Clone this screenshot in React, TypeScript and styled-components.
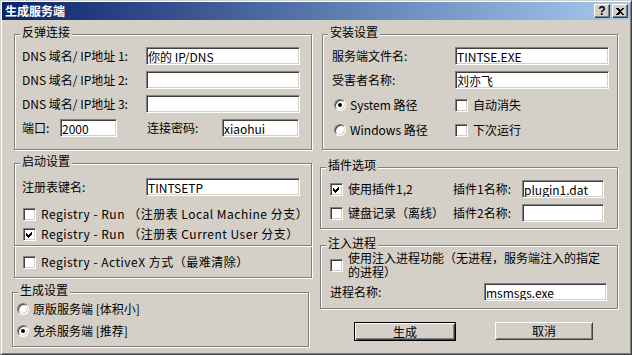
import React from "react";
import styled, { createGlobalStyle } from "styled-components";

const FACE = "#D4D0C8";

const GlobalStyle = createGlobalStyle`
  html, body { margin: 0; padding: 0; background: ${FACE}; }
  body {
    font-family: "Noto Sans CJK SC", "Liberation Sans", sans-serif;
    font-size: 12px;
    color: #000;
  }
  * { box-sizing: border-box; }
`;

const Window = styled.div`
  width: 632px;
  height: 355px;
  background: ${FACE};
  border: 1px solid;
  border-color: ${FACE} #404040 #404040 ${FACE};
  box-shadow: inset 1px 1px 0 #fff, inset -1px -1px 0 #808080;
  padding: 1px;
  display: flex;
  flex-direction: column;
  overflow: hidden;
`;

const TitleBar = styled.div`
  height: 18px;
  flex: none;
  display: flex;
  align-items: center;
  padding: 0 2px 0 3px;
  background: linear-gradient(to right, #0a246a, #a6caf0);
`;

const Title = styled.span`
  flex: 1;
  color: #fff;
  font-weight: bold;
  font-size: 12px;
  line-height: 14px;
`;

const CaptionButtons = styled.div`
  display: flex;
  gap: 2px;
`;

const CaptionButton = styled.div`
  width: 16px;
  height: 14px;
  background: ${FACE};
  display: flex;
  align-items: center;
  justify-content: center;
  border: 1px solid;
  border-color: #fff #404040 #404040 #fff;
  box-shadow: inset -1px -1px 0 #808080;
  font: bold 12px "Liberation Sans", sans-serif;
  line-height: 12px;
`;

const Body = styled.div`
  display: grid;
  grid-template-columns: 300px 298px;
  column-gap: 8px;
  padding-left: 10px;
  align-items: start;
`;

const Column = styled.div`
  display: flex;
  flex-direction: column;
`;

const Group = styled.div<{ $h: number; $mt: number; $ml?: number; $w: number }>`
  position: relative;
  width: ${(p) => p.$w}px;
  height: ${(p) => p.$h}px;
  margin-top: ${(p) => p.$mt}px;
  margin-left: ${(p) => p.$ml ?? 0}px;
  border: 1px solid #808080;
  box-shadow: inset 1px 1px 0 #fff, 1px 1px 0 #fff;
`;

const Legend = styled.span`
  position: absolute;
  top: -10px;
  left: 5px;
  padding: 0 2px;
  background: ${FACE};
  line-height: 14px;
  white-space: nowrap;
`;

const Content = styled.div<{ $pt: number; $pl: number; $gap?: number }>`
  display: flex;
  flex-direction: column;
  gap: ${(p) => p.$gap ?? 0}px;
  padding: ${(p) => p.$pt}px 0 0 ${(p) => p.$pl}px;
`;

const Row = styled.div<{ $h?: number; $mt?: number }>`
  display: flex;
  align-items: center;
  height: ${(p) => p.$h ?? 18}px;
  margin-top: ${(p) => p.$mt ?? 0}px;
`;

const Label = styled.span<{ $w?: number; $ml?: number }>`
  flex: none;
  width: ${(p) => (p.$w ? `${p.$w}px` : "auto")};
  margin-left: ${(p) => p.$ml ?? 0}px;
  white-space: nowrap;
  line-height: 14px;
`;

const TextBox = styled.input<{ $w: number }>`
  flex: none;
  width: ${(p) => p.$w}px;
  height: 18px;
  margin: 0;
  padding: 0 1px;
  border: 1px solid;
  border-color: #808080 #fff #fff #808080;
  box-shadow: inset 1px 1px 0 #404040, inset -1px -1px 0 ${FACE};
  background: #fff;
  font: 12px "Noto Sans CJK SC", "Liberation Sans", sans-serif;
  line-height: 14px;
  color: #000;
  outline: none;
`;

const Separator = styled.div`
  height: 2px;
  margin: 3px -1px 0 -8px;
  border-top: 1px solid #808080;
  border-bottom: 1px solid #fff;
`;

const Option = styled.label<{ $w?: number; $ml?: number; $ls?: number }>`
  flex: none;
  display: flex;
  align-items: center;
  width: ${(p) => (p.$w ? `${p.$w}px` : "auto")};
  margin-left: ${(p) => p.$ml ?? 0}px;
  letter-spacing: ${(p) => p.$ls ?? 0}px;
  white-space: nowrap;
  line-height: 14px;
`;

const Box = styled.span`
  flex: none;
  width: 13px;
  height: 13px;
  margin-right: 5px;
  background: #fff;
  border: 1px solid;
  border-color: #808080 #fff #fff #808080;
  box-shadow: inset 1px 1px 0 #404040, inset -1px -1px 0 ${FACE};
  display: flex;
  align-items: center;
  justify-content: center;
`;

const Round = styled.span<{ $on?: boolean }>`
  position: relative;
  flex: none;
  width: 12px;
  height: 12px;
  margin-right: 4px;
  border-radius: 50%;
  background: #fff;
  border: 1px solid;
  border-color: #808080 #fff #fff #808080;
  box-shadow: inset 1px 1px 0 #404040, inset -1px -1px 0 ${FACE};
  &::after {
    content: "";
    display: ${(p) => (p.$on ? "block" : "none")};
    position: absolute;
    left: 3px;
    top: 3px;
    width: 4px;
    height: 4px;
    border-radius: 50%;
    background: #000;
  }
`;

const WrapText = styled.span`
  display: flex;
  flex-direction: column;
  line-height: 14px;
  white-space: nowrap;
`;

const ButtonRow = styled.div`
  display: flex;
  align-items: flex-start;
  margin-top: 13px;
  padding-left: 34px;
  gap: 39px;
`;

const Button = styled.div<{ $default?: boolean }>`
  display: flex;
  align-items: center;
  justify-content: center;
  width: ${(p) => (p.$default ? 102 : 98)}px;
  height: ${(p) => (p.$default ? 19 : 18)}px;
  background: ${FACE};
  line-height: 14px;
  border: 1px solid;
  border-color: ${(p) => (p.$default ? "#000" : "#fff #404040 #404040 #fff")};
  box-shadow: ${(p) =>
    p.$default
      ? "inset 1px 1px 0 #fff, inset -1px -1px 0 #404040, inset -2px -2px 0 #808080"
      : `inset 1px 1px 0 ${FACE}, inset -1px -1px 0 #808080`};
`;

const Check = ({ on }: { on?: boolean }) => (
  <Box>
    {on && (
      <svg width="9" height="9" viewBox="0 0 9 9" shapeRendering="crispEdges">
        <polygon points="1,3 3,5 7,1 7,4 3,8 1,6" fill="#000" />
      </svg>
    )}
  </Box>
);

const CloseGlyph = () => (
  <svg width="8" height="7" viewBox="0 0 8 7" shapeRendering="crispEdges">
    <path d="M0 0h2l2 2 2-2h2L5 3.5 8 7H6L4 5 2 7H0l3-3.5z" fill="#000" />
  </svg>
);

export default function App() {
  return (
    <>
      <GlobalStyle />
      <Window>
        <TitleBar>
          <Title>生成服务端</Title>
          <CaptionButtons>
            <CaptionButton>?</CaptionButton>
            <CaptionButton>
              <CloseGlyph />
            </CaptionButton>
          </CaptionButtons>
        </TitleBar>
        <Body>
          <Column>
            <Group $w={298} $h={116} $mt={14} $ml={2}>
              <Legend>反弹连接</Legend>
              <Content $pt={12} $pl={7} $gap={6}>
                <Row>
                  <Label $w={124}>DNS 域名/ IP地址 1:</Label>
                  <TextBox $w={154} value="你的 IP/DNS" readOnly />
                </Row>
                <Row>
                  <Label $w={124}>DNS 域名/ IP地址 2:</Label>
                  <TextBox $w={154} value="" readOnly />
                </Row>
                <Row>
                  <Label $w={124}>DNS 域名/ IP地址 3:</Label>
                  <TextBox $w={154} value="" readOnly />
                </Row>
                <Row>
                  <Label $w={38}>端口:</Label>
                  <TextBox $w={57} value="2000" readOnly />
                  <Label $w={75} $ml={30}>
                    连接密码:
                  </Label>
                  <TextBox $w={77} value="xiaohui" readOnly />
                </Row>
              </Content>
            </Group>

            <Group $w={298} $h={115} $mt={13} $ml={2}>
              <Legend>启动设置</Legend>
              <Content $pt={14} $pl={7}>
                <Row>
                  <Label $w={124}>注册表键名:</Label>
                  <TextBox $w={154} value="TINTSETP" readOnly />
                </Row>
                <Row $h={16} $mt={10}>
                  <Option $ml={1} $ls={0.5}>
                    <Check />
                    Registry - Run （注册表 Local Machine 分支）
                  </Option>
                </Row>
                <Row $h={16} $mt={4}>
                  <Option $ml={1} $ls={0.5}>
                    <Check on />
                    Registry - Run （注册表 Current User 分支）
                  </Option>
                </Row>
                <Separator />
                <Row $h={16} $mt={7}>
                  <Option $ml={1} $ls={0.5}>
                    <Check />
                    Registry - ActiveX 方式（最难清除）
                  </Option>
                </Row>
              </Content>
            </Group>

            <Group $w={297} $h={55} $mt={14}>
              <Legend>生成设置</Legend>
              <Content $pt={8} $pl={4} $gap={6}>
                <Row $h={16}>
                  <Option>
                    <Round />
                    原版服务端 [体积小]
                  </Option>
                </Row>
                <Row $h={16}>
                  <Option>
                    <Round $on />
                    免杀服务端 [推荐]
                  </Option>
                </Row>
              </Content>
            </Group>
          </Column>

          <Column>
            <Group $w={296} $h={116} $mt={14} $ml={2}>
              <Legend>安装设置</Legend>
              <Content $pt={12} $pl={9} $gap={6}>
                <Row>
                  <Label $w={123}>服务端文件名:</Label>
                  <TextBox $w={154} value="TINTSE.EXE" readOnly />
                </Row>
                <Row>
                  <Label $w={123}>受害者名称:</Label>
                  <TextBox $w={154} value="刘亦飞" readOnly />
                </Row>
                <Row $h={20}>
                  <Option $w={121} $ml={2}>
                    <Round $on />
                    System 路径
                  </Option>
                  <Option>
                    <Check />
                    自动消失
                  </Option>
                </Row>
                <Row>
                  <Option $w={121} $ml={2}>
                    <Round />
                    Windows 路径
                  </Option>
                  <Option>
                    <Check />
                    下次运行
                  </Option>
                </Row>
              </Content>
            </Group>

            <Group $w={298} $h={62} $mt={17}>
              <Legend>插件选项</Legend>
              <Content $pt={12} $pl={9} $gap={6}>
                <Row>
                  <Option $w={123}>
                    <Check on />
                    使用插件1,2
                  </Option>
                  <Label $w={69}>插件1名称:</Label>
                  <TextBox $w={82} value="plugin1.dat" readOnly />
                </Row>
                <Row>
                  <Option $w={123}>
                    <Check />
                    键盘记录（离线）
                  </Option>
                  <Label $w={69}>插件2名称:</Label>
                  <TextBox $w={82} value="" readOnly />
                </Row>
              </Content>
            </Group>

            <Group $w={298} $h={64} $mt={16}>
              <Legend>注入进程</Legend>
              <Content $pt={5} $pl={9}>
                <Row $h={28}>
                  <Option>
                    <Check />
                    <WrapText>
                      <span>使用注入进程功能（无进程，服务端注入的指定</span>
                      <span>的进程）</span>
                    </WrapText>
                  </Option>
                </Row>
                <Row $mt={4}>
                  <Label $w={154}>进程名称:</Label>
                  <TextBox $w={123} value="msmsgs.exe" readOnly />
                </Row>
              </Content>
            </Group>

            <ButtonRow>
              <Button $default>生成</Button>
              <Button>取消</Button>
            </ButtonRow>
          </Column>
        </Body>
      </Window>
    </>
  );
}
